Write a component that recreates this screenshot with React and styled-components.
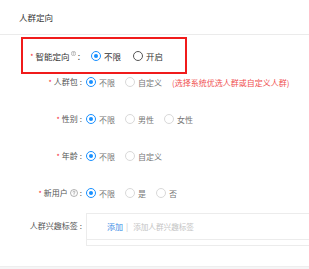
import React from 'react';
import styled, { createGlobalStyle } from 'styled-components';

const GlobalStyle = createGlobalStyle`
  body {
    margin: 0;
    background: #fff;
    font-family: "Noto Sans CJK SC", "Noto Sans", sans-serif;
    -webkit-font-smoothing: antialiased;
  }
`;

const Page = styled.div`
  width: 309px;
  height: 269px;
  overflow: hidden;
  display: flex;
  flex-direction: column;
`;

const Header = styled.div`
  height: 34px;
  flex-shrink: 0;
  display: flex;
  align-items: center;
  padding-left: 19px;
  font-size: 8.5px;
  color: #333;
  border-bottom: 1px solid #ebebeb;
`;

const HighlightBox = styled.div`
  margin: 2px 0 0 21px;
  width: 162px;
  height: 33px;
  border: 2px solid #f01b1b;
  display: flex;
  align-items: center;
  flex-shrink: 0;
`;

const Row = styled.div`
  display: flex;
  align-items: ${(p) => (p.$top ? 'flex-start' : 'center')};
  height: ${(p) => (p.$top ? 'auto' : '16px')};
  margin-top: ${(p) => p.$mt || 0}px;
  flex-shrink: 0;
`;

const Label = styled.div`
  width: ${(p) => p.$w}px;
  margin-right: ${(p) => p.$gap}px;
  display: flex;
  justify-content: flex-end;
  align-items: center;
  font-size: ${(p) => p.$size || 8}px;
  line-height: ${(p) => p.$lh || 16}px;
  color: ${(p) => p.$color || '#555'};
  white-space: nowrap;
  flex-shrink: 0;
`;

const Star = styled.span`
  color: #f5222d;
  font-size: 7px;
  margin-right: 2px;
`;

const Colon = styled.span`
  margin-left: 2px;
`;

const Sup = styled.span`
  display: inline-flex;
  align-self: flex-start;
  margin: 3px 0 0 1px;
`;

const HelpIcon = styled.span`
  display: inline-flex;
  margin-left: 2px;
`;

const Option = styled.label`
  display: inline-flex;
  align-items: center;
  gap: 3px;
  margin-right: ${(p) => p.$mr || 10}px;
  font-size: ${(p) => p.$size || 8}px;
  color: ${(p) => p.$color || '#777'};
  white-space: nowrap;
`;

const Radio = styled.span`
  width: 10px;
  height: 10px;
  box-sizing: border-box;
  border-radius: 50%;
  border: 1px solid
    ${(p) => (p.$checked ? '#1890ff' : p.$dark ? '#555' : '#d9d9d9')};
  display: inline-flex;
  align-items: center;
  justify-content: center;
  background: #fff;

  &::after {
    content: '';
    width: 4px;
    height: 4px;
    border-radius: 50%;
    background: #1890ff;
    display: ${(p) => (p.$checked ? 'block' : 'none')};
  }
`;

const Hint = styled.span`
  font-size: 8px;
  color: #f0504f;
  white-space: nowrap;
`;

const TagBox = styled.div`
  width: 240px;
  height: 33px;
  box-sizing: border-box;
  border: 1px solid #ececec;
  flex-shrink: 0;
`;

const TagLine = styled.div`
  height: 25px;
  display: flex;
  align-items: center;
  padding-left: 20px;
  border-bottom: 1px solid #ececec;
  font-size: 8px;
`;

const AddLink = styled.span`
  color: #3a8ee6;
`;

const Divider = styled.span`
  color: #c8c8c8;
  margin: 0 5px 0 3px;
`;

const Placeholder = styled.span`
  color: #c4c4c4;
  font-size: 7.6px;
`;

const Footer = styled.div`
  margin-top: 20px;
  flex: 1;
  background: #f5f5f6;
  border-top: 1px solid #eeeeee;
`;

const QuestionCircle = ({ size, color }) => (
  <svg width={size} height={size} viewBox="0 0 16 16" fill="none">
    <circle cx="8" cy="8" r="7" stroke={color} strokeWidth="1.3" />
    <path
      d="M6 6.2a2 2 0 1 1 2.8 1.8c-.5.2-.8.6-.8 1.1v.6"
      stroke={color}
      strokeWidth="1.3"
      strokeLinecap="round"
    />
    <circle cx="8" cy="11.6" r="0.8" fill={color} />
  </svg>
);

const RadioItem = ({ checked, dark, children, ...rest }) => (
  <Option {...rest}>
    <Radio $checked={checked} $dark={dark} />
    {children}
  </Option>
);

const rows = [
  { label: '人群包', opts: ['不限', '自定义'], hint: '(选择系统优选人群或自定义人群)' },
  { label: '性别', opts: ['不限', '男性', '女性'] },
  { label: '年龄', opts: ['不限', '自定义'] },
  { label: '新用户', help: true, opts: ['不限', '是', '否'] },
];

const App = () => {
  return (
    <Page>
      <GlobalStyle />
      <Header>人群定向</Header>

      <HighlightBox>
        <Row>
          <Label $w={57} $gap={11} $size={8.5} $color="#333">
            <Star>*</Star>
            智能定向
            <Sup>
              <QuestionCircle size={5} color="#666" />
            </Sup>
            <Colon>:</Colon>
          </Label>
          <RadioItem checked $size={8.5} $color="#333" $mr={12}>
            不限
          </RadioItem>
          <RadioItem dark $size={8.5} $color="#333">
            开启
          </RadioItem>
        </Row>
      </HighlightBox>

      {rows.map((r, i) => (
        <Row key={r.label} $mt={i === 0 ? 0 : 21}>
          <Label $w={82} $gap={4}>
            <Star>*</Star>
            {r.label}
            {r.help && (
              <HelpIcon>
                <QuestionCircle size={8} color="#888" />
              </HelpIcon>
            )}
            <Colon>:</Colon>
          </Label>
          {r.opts.map((o, j) => (
            <RadioItem key={o} checked={j === 0}>
              {o}
            </RadioItem>
          ))}
          {r.hint && <Hint>{r.hint}</Hint>}
        </Row>
      ))}

      <Row $top $mt={12}>
        <Label $w={82} $gap={4} $lh={26}>
          人群兴趣标签
          <Colon>:</Colon>
        </Label>
        <TagBox>
          <TagLine>
            <AddLink>添加</AddLink>
            <Divider>|</Divider>
            <Placeholder>添加人群兴趣标签</Placeholder>
          </TagLine>
        </TagBox>
      </Row>

      <Footer />
    </Page>
  );
};

export default App;
